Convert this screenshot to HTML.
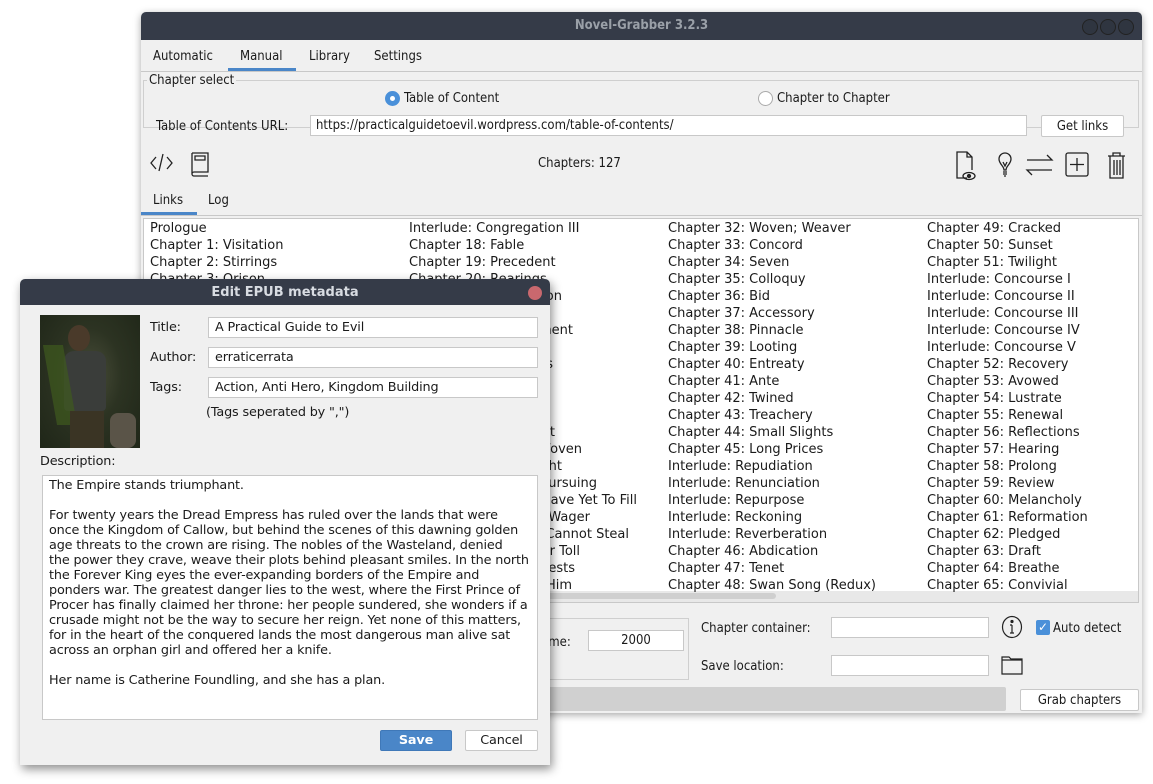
<!DOCTYPE html>
<html><head><meta charset="utf-8">
<style>
*{box-sizing:border-box;margin:0;padding:0}
body{width:1153px;height:784px;background:#fff;position:relative;overflow:hidden;font-family:"DejaVu Sans","Liberation Sans",sans-serif;font-size:13px;color:#1a1a1a}
.a{position:absolute}
.cond{font-family:"DejaVu Sans Condensed","DejaVu Sans",sans-serif;font-stretch:condensed}
.inp{position:absolute;background:#fff;border:1px solid #c8c8c8}
.btn{position:absolute;background:#fff;border:1px solid #c8c8c8;border-radius:2px;text-align:center}
.row span{position:absolute;white-space:nowrap}
.dlg{font-size:12.8px;letter-spacing:-0.15px}
</style></head><body>
<div class="a" style="left:141px;top:12px;width:1001px;height:701px;background:#f0f0f0;border-radius:5px 5px 0 0;box-shadow:0 2px 8px rgba(0,0,0,.35);overflow:hidden">
  <div class="a cond" style="left:0;top:0;width:1001px;height:28px;background:#353b48;color:#9aa0a8;text-align:center;line-height:28px;font-weight:bold;font-size:13px">Novel-Grabber 3.2.3</div>
  <div class="a" style="left:941px;top:7px;width:16px;height:16px;border-radius:50%;border:1px solid #222;background:#2f3540"></div>
  <div class="a" style="left:959px;top:7px;width:16px;height:16px;border-radius:50%;border:1px solid #222;background:#2f3540"></div>
  <div class="a" style="left:977px;top:7px;width:16px;height:16px;border-radius:50%;border:1px solid #222;background:#2f3540"></div>
  <div class="a cond" style="left:12px;top:37px">Automatic</div>
  <div class="a cond" style="left:99px;top:37px">Manual</div>
  <div class="a cond" style="left:168px;top:37px">Library</div>
  <div class="a cond" style="left:233px;top:37px">Settings</div>
  <div class="a" style="left:87px;top:56px;width:68px;height:3px;background:#4a86c8"></div>
  <div class="a" style="left:0;top:59px;width:1001px;height:1px;background:#c8c8c8"></div>
  <div class="a" style="left:2px;top:68px;width:996px;height:48px;border:1px solid #cfcfcf"></div>
  <div class="a cond" style="left:6px;top:61px;background:#f0f0f0;padding:0 2px">Chapter select</div>
  <div class="a" style="left:244px;top:79px;width:15px;height:15px;border-radius:50%;background:#4a90d9"><div class="a" style="left:5px;top:5px;width:5px;height:5px;border-radius:50%;background:#fff"></div></div>
  <div class="a cond" style="left:263px;top:79px">Table of Content</div>
  <div class="a" style="left:617px;top:79px;width:15px;height:15px;border-radius:50%;background:#fff;border:1px solid #aaa"></div>
  <div class="a cond" style="left:636px;top:79px">Chapter to Chapter</div>
  <div class="a cond" style="left:15px;top:107px">Table of Contents URL:</div>
  <div class="inp cond" style="left:169px;top:103px;width:717px;height:21px;padding-left:5px;line-height:20px">https://practicalguidetoevil.wordpress.com/table-of-contents/</div>
  <div class="btn cond" style="left:900px;top:103px;width:83px;height:22px;line-height:21px">Get links</div>
  <svg class="a" style="left:8px;top:140px" width="70" height="28" viewBox="0 0 70 28" fill="none" stroke="#222" stroke-width="1.3">
    <path d="M7 5 L2 11 L7 17 M14 2 L10 19 M18 5 L23 11 L18 17"/>
    <path d="M43 1 H59 V20 H45 A2 2 0 0 0 45 24 H59 M43 1 V22 A2 2 0 0 0 45 24 M46 4 H56 V8 H46 Z"/>
  </svg>
  <div class="a cond" style="left:397px;top:144px">Chapters: 127</div>
  <svg class="a" style="left:812px;top:136px" width="180" height="34" viewBox="0 0 180 34" fill="none" stroke="#222" stroke-width="1.3">
    <path d="M14 30 H4 V4 H14 L19 9 V22 M14 4 V9 H19"/>
    <ellipse cx="16" cy="28" rx="6" ry="3.5"/><circle cx="16" cy="28" r="1.5" fill="#222"/>
    <path d="M51 22 C51 18 46 16 46 11 A6 6 0 0 1 58 11 C58 16 53 18 53 22 Z M50 24 H54 M50 26 H54 M51 28 H53 M50 14 L52 18 L54 14"/>
    <path d="M74 12 H99 L94 7 M99 22 H74 L79 27"/>
    <rect x="113" y="5" width="22" height="23" rx="2"/><path d="M124 10 V23 M117 16.5 H131"/>
    <path d="M155 8 H172 M160 8 V5 H167 V8 M157 8 V30 H170 V8 M161 12 V27 M164 12 V27 M167 12 V27"/>
  </svg>
  <div class="a cond" style="left:12px;top:181px">Links</div>
  <div class="a cond" style="left:67px;top:181px">Log</div>
  <div class="a" style="left:0;top:200px;width:56px;height:3px;background:#4a86c8"></div>
  <div class="a" style="left:0;top:203px;width:1001px;height:1px;background:#c8c8c8"></div>
  <div class="a" style="left:2px;top:206px;width:996px;height:385px;background:#fff;border:1px solid #c8c8c8"></div>
  <div class="a" style="left:3px;top:579px;width:994px;height:11px;background:#e8e8e8"></div>
  <div class="a" style="left:5px;top:581px;width:630px;height:6px;border-radius:3px;background:#cfcfcf"></div>
  <div class="a" style="left:300px;top:606px;width:248px;height:62px;border:1px solid #cfcfcf"></div>
  <div class="a cond" style="left:404px;top:623px">ime:</div>
  <div class="inp cond" style="left:447px;top:618px;width:96px;height:21px;text-align:center;line-height:20px">2000</div>
  <div class="a cond" style="left:560px;top:609px">Chapter container:</div>
  <div class="inp" style="left:690px;top:605px;width:158px;height:21px"></div>
  <svg class="a" style="left:860px;top:603px" width="22" height="24" viewBox="0 0 22 24" fill="none" stroke="#222" stroke-width="1.2"><ellipse cx="11" cy="12" rx="9.5" ry="10.5"/><path d="M11 10 V18 M9 10 H11 M9 18 H13"/><circle cx="11" cy="6.5" r="1" fill="#222"/></svg>
  <div class="a" style="left:895px;top:608px;width:14px;height:15px;border-radius:2px;background:#4a90d9;color:#fff;font-size:12px;line-height:15px;text-align:center">✓</div>
  <div class="a cond" style="left:912px;top:609px">Auto detect</div>
  <div class="a cond" style="left:560px;top:647px">Save location:</div>
  <div class="inp" style="left:690px;top:643px;width:158px;height:21px"></div>
  <svg class="a" style="left:860px;top:643px" width="22" height="20" viewBox="0 0 22 20" fill="none" stroke="#222" stroke-width="1.2"><path d="M1 2 H8 L10 4 H21 V19 H1 Z M1 5 H21"/></svg>
  <div class="a" style="left:2px;top:675px;width:863px;height:24px;background:#d0d0d0;border-radius:2px"></div>
  <div class="btn cond" style="left:879px;top:677px;width:119px;height:22px;line-height:21px">Grab chapters</div>
</div>
<div class="row">
<span style="left:150px;top:221px">Prologue</span>
<span style="left:150px;top:238px">Chapter 1: Visitation</span>
<span style="left:150px;top:255px">Chapter 2: Stirrings</span>
<span style="left:150px;top:272px">Chapter 3: Orison</span>
<span style="left:409px;top:221px">Interlude: Congregation III</span>
<span style="left:409px;top:238px">Chapter 18: Fable</span>
<span style="left:409px;top:255px">Chapter 19: Precedent</span>
<span style="left:409px;top:272px">Chapter 20: Rearings</span>
<span style="right:591px;top:289px">Chapter 21: Recognition</span>
<span style="right:580px;top:323px">Chapter 23: Entanglement</span>
<span style="right:600px;top:357px">Chapter 25: Trials</span>
<span style="right:598px;top:425px">Chapter 29: Tempest</span>
<span style="right:571px;top:442px">Chapter 30: Woven</span>
<span style="right:591px;top:459px">Chapter 31: Night</span>
<span style="right:556px;top:476px">Interlude: Pursuing</span>
<span style="right:516px;top:493px">Interlude: Have Yet To Fill</span>
<span style="right:563px;top:510px">Interlude: Wager</span>
<span style="right:524px;top:527px">Interlude: Cannot Steal</span>
<span style="right:573px;top:544px">Chapter 45: Her Toll</span>
<span style="right:578px;top:561px">Chapter 46: Guests</span>
<span style="right:581px;top:578px">Chapter 47: Him</span>
<span style="left:668px;top:221px">Chapter 32: Woven; Weaver</span>
<span style="left:668px;top:238px">Chapter 33: Concord</span>
<span style="left:668px;top:255px">Chapter 34: Seven</span>
<span style="left:668px;top:272px">Chapter 35: Colloquy</span>
<span style="left:668px;top:289px">Chapter 36: Bid</span>
<span style="left:668px;top:306px">Chapter 37: Accessory</span>
<span style="left:668px;top:323px">Chapter 38: Pinnacle</span>
<span style="left:668px;top:340px">Chapter 39: Looting</span>
<span style="left:668px;top:357px">Chapter 40: Entreaty</span>
<span style="left:668px;top:374px">Chapter 41: Ante</span>
<span style="left:668px;top:391px">Chapter 42: Twined</span>
<span style="left:668px;top:408px">Chapter 43: Treachery</span>
<span style="left:668px;top:425px">Chapter 44: Small Slights</span>
<span style="left:668px;top:442px">Chapter 45: Long Prices</span>
<span style="left:668px;top:459px">Interlude: Repudiation</span>
<span style="left:668px;top:476px">Interlude: Renunciation</span>
<span style="left:668px;top:493px">Interlude: Repurpose</span>
<span style="left:668px;top:510px">Interlude: Reckoning</span>
<span style="left:668px;top:527px">Interlude: Reverberation</span>
<span style="left:668px;top:544px">Chapter 46: Abdication</span>
<span style="left:668px;top:561px">Chapter 47: Tenet</span>
<span style="left:668px;top:578px">Chapter 48: Swan Song (Redux)</span>
<span style="left:927px;top:221px">Chapter 49: Cracked</span>
<span style="left:927px;top:238px">Chapter 50: Sunset</span>
<span style="left:927px;top:255px">Chapter 51: Twilight</span>
<span style="left:927px;top:272px">Interlude: Concourse I</span>
<span style="left:927px;top:289px">Interlude: Concourse II</span>
<span style="left:927px;top:306px">Interlude: Concourse III</span>
<span style="left:927px;top:323px">Interlude: Concourse IV</span>
<span style="left:927px;top:340px">Interlude: Concourse V</span>
<span style="left:927px;top:357px">Chapter 52: Recovery</span>
<span style="left:927px;top:374px">Chapter 53: Avowed</span>
<span style="left:927px;top:391px">Chapter 54: Lustrate</span>
<span style="left:927px;top:408px">Chapter 55: Renewal</span>
<span style="left:927px;top:425px">Chapter 56: Reflections</span>
<span style="left:927px;top:442px">Chapter 57: Hearing</span>
<span style="left:927px;top:459px">Chapter 58: Prolong</span>
<span style="left:927px;top:476px">Chapter 59: Review</span>
<span style="left:927px;top:493px">Chapter 60: Melancholy</span>
<span style="left:927px;top:510px">Chapter 61: Reformation</span>
<span style="left:927px;top:527px">Chapter 62: Pledged</span>
<span style="left:927px;top:544px">Chapter 63: Draft</span>
<span style="left:927px;top:561px">Chapter 64: Breathe</span>
<span style="left:927px;top:578px">Chapter 65: Convivial</span>
</div>
<div class="a dlg" style="left:20px;top:279px;width:530px;height:486px;background:#f0f0f0;border-radius:5px 5px 0 0;box-shadow:2px 4px 10px rgba(0,0,0,.45);overflow:hidden">
  <div class="a" style="left:0;top:0;width:530px;height:26px;background:#353b48;color:#d8dce2;text-align:center;line-height:27px;font-weight:bold;font-size:13px;letter-spacing:0">Edit EPUB metadata</div>
  <div class="a" style="left:508px;top:7px;width:14px;height:14px;border-radius:50%;background:#c9686e"></div>
  <div class="a" style="left:20px;top:36px;width:100px;height:133px;background:radial-gradient(ellipse at 50% 45%,#4a4e3a 0%,#2c3322 45%,#1f2618 100%)">
    <div class="a" style="left:28px;top:10px;width:22px;height:26px;border-radius:50%;background:#4a3a2a"></div>
    <div class="a" style="left:24px;top:36px;width:42px;height:60px;border-radius:10px 10px 4px 4px;background:#3a3d3a"></div>
    <div class="a" style="left:10px;top:30px;width:20px;height:80px;background:#3e5a1e;opacity:.7;transform:skewX(10deg)"></div>
    <div class="a" style="left:30px;top:96px;width:34px;height:37px;background:#3a3424"></div>
    <div class="a" style="left:70px;top:98px;width:26px;height:35px;border-radius:8px;background:#5a5448"></div>
  </div>
  <div class="a" style="left:130px;top:41px">Title:</div>
  <div class="a" style="left:130px;top:71px">Author:</div>
  <div class="a" style="left:130px;top:101px">Tags:</div>
  <div class="inp" style="left:188px;top:38px;width:330px;height:21px;padding-left:6px;line-height:19px">A Practical Guide to Evil</div>
  <div class="inp" style="left:188px;top:68px;width:330px;height:21px;padding-left:6px;line-height:19px">erraticerrata</div>
  <div class="inp" style="left:188px;top:98px;width:330px;height:21px;padding-left:6px;line-height:19px">Action, Anti Hero, Kingdom Building</div>
  <div class="a" style="left:186px;top:126px">(Tags seperated by ",")</div>
  <div class="a" style="left:20px;top:175px">Description:</div>
  <div class="inp" style="left:22px;top:196px;width:496px;height:245px;padding:2px 6px;line-height:15px;white-space:pre">The Empire stands triumphant.

For twenty years the Dread Empress has ruled over the lands that were
once the Kingdom of Callow, but behind the scenes of this dawning golden
age threats to the crown are rising. The nobles of the Wasteland, denied
the power they crave, weave their plots behind pleasant smiles. In the north
the Forever King eyes the ever-expanding borders of the Empire and
ponders war. The greatest danger lies to the west, where the First Prince of
Procer has finally claimed her throne: her people sundered, she wonders if a
crusade might not be the way to secure her reign. Yet none of this matters,
for in the heart of the conquered lands the most dangerous man alive sat
across an orphan girl and offered her a knife.

Her name is Catherine Foundling, and she has a plan.</div>
  <div class="btn" style="left:360px;top:451px;width:72px;height:21px;line-height:20px;background:#4a86c8;border-color:#3f78b8;color:#fff;font-weight:bold">Save</div>
  <div class="btn" style="left:445px;top:451px;width:73px;height:21px;line-height:20px">Cancel</div>
</div>
</body></html>
